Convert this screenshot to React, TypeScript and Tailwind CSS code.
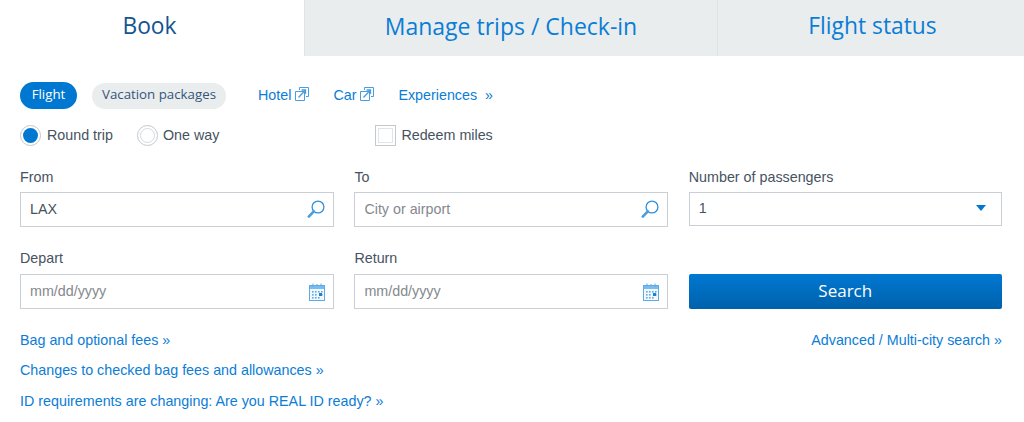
import React from 'react';

const linkCls = "text-[#0b7dd6] text-[14.3px] leading-[20px]";

function ExternalIcon() {
  return (
    <svg width="14" height="14" viewBox="0 0 14 14" fill="none" stroke="#4a9ee0" strokeWidth="1" className="ml-[4px] mb-[1px]">
      <path d="M4.5 3V.5h9v9H11" />
      <path d="M.5 4.5h9v9h-9z" />
      <path d="M3.5 10.5l7-7.5M6.5 3h4v4" strokeWidth="1.3" />
    </svg>
  );
}

function SearchIcon() {
  return (
    <svg width="18" height="19" viewBox="0 0 18 19" fill="none" className="shrink-0">
      <circle cx="11" cy="7" r="5.9" stroke="#2f8fdc" strokeWidth="1.3" />
      <path d="M6.8 11.4L1.8 16.6" stroke="#4a9ee0" strokeWidth="2.6" strokeLinecap="round" />
    </svg>
  );
}

function CalendarIcon() {
  const dots = [
    [4, 9], [7, 9], [10, 9], [13, 9],
    [4, 12], [7, 12], [13, 12],
    [4, 15], [7, 15], [10, 15],
  ];
  return (
    <svg width="16" height="18" viewBox="0 0 16 18" fill="none" className="shrink-0">
      <rect x="0.5" y="2.5" width="15" height="15" fill="#f1f8fd" stroke="#5fa9e4" />
      <rect x="1" y="3" width="14" height="3" fill="#7dbbea" />
      <path d="M4 .5v3M12 .5v3M8 1v1" stroke="#5fa9e4" />
      {dots.map(([x, y]) => (
        <rect key={`${x}-${y}`} x={x - 1} y={y - 1} width="1.6" height="1.6" fill="#5fa9e4" />
      ))}
      <rect x="10" y="10" width="3" height="3" fill="#1f7fcb" />
    </svg>
  );
}

function Field({ label, value, placeholder, icon, labelGap = 'mb-[5px]' }: { label: string; value?: string; placeholder?: string; icon: React.ReactNode; labelGap?: string }) {
  return (
    <div>
      <div className={`text-[14.3px] leading-[20px] text-[#46535f] ${labelGap}`}>{label}</div>
      <div className="h-[35px] border border-[#c9cfd4] bg-white pl-[9px] pr-[8px] flex items-center justify-between">
        <span className={`text-[14.3px] ${value ? 'text-[#46535f]' : 'text-[#85898d]'}`}>{value ?? placeholder}</span>
        {icon}
      </div>
    </div>
  );
}

export default function App() {
  return (
    <div className="w-[1024px] h-[422px] bg-white overflow-hidden font-['Liberation_Sans',Arial,sans-serif]">
      {/* Tabs */}
      <div className="flex h-[56px] font-['Open_Sans',sans-serif] text-[22.8px]">
        <div className="w-[304px] flex items-center justify-center text-[#14548f] pb-[4px] pr-[5px]">Book</div>
        <div className="w-[413px] bg-[#e9edee] border-l border-[#dfe4e6] flex items-center justify-center text-[23px] text-[#0b7dd6] pb-[4px]">Manage trips / Check-in</div>
        <div className="flex-1 bg-[#e9edee] border-l border-[#dfe4e6] flex items-center justify-center text-[#0b7dd6] pb-[4px] pl-[3px]">Flight status</div>
      </div>

      <div className="pl-[20px] pr-[22px]">
        {/* Product switch */}
        <div className="flex items-center mt-[26px] h-[27px]">
          <span className="h-[27px] w-[57px] pb-[1px] rounded-full bg-[#0078d2] text-white text-[13.3px] font-['Open_Sans',sans-serif] flex items-center justify-center">Flight</span>
          <span className="ml-[15px] h-[26px] w-[134px] pb-[1px] rounded-full bg-[#e9edee] text-[#36567a] text-[13.3px] font-['Open_Sans',sans-serif] flex items-center justify-center">Vacation packages</span>
          <span className={`ml-[32px] pb-[2px] flex items-center ${linkCls}`}>Hotel<ExternalIcon /></span>
          <span className={`ml-[24px] pb-[2px] flex items-center ${linkCls}`}>Car<ExternalIcon /></span>
          <span className={`ml-[24px] pb-[2px] ${linkCls}`}>Experiences&nbsp;&nbsp;»</span>
        </div>

        {/* Trip type */}
        <div className="flex items-center mt-[16px] h-[21px] text-[14.3px] text-[#46535f]">
          <span className="w-[21px] h-[21px] rounded-full border border-[#c3c9ce] flex items-center justify-center">
            <span className="w-[15px] h-[15px] rounded-full bg-[#0078d2]" />
          </span>
          <span className="ml-[6px]">Round trip</span>
          <span className="ml-[24px] w-[21px] h-[21px] rounded-full border border-[#c3c9ce] flex items-center justify-center">
            <span className="w-[15px] h-[15px] rounded-full border border-[#d5dade]" />
          </span>
          <span className="ml-[5px]">One way</span>
          <span className="ml-[156px] w-[21px] h-[21px] border border-[#c3c9ce] flex items-center justify-center">
            <span className="w-[15px] h-[15px] border border-[#e1e5e8]" />
          </span>
          <span className="ml-[5px]">Redeem miles</span>
        </div>

        {/* Form */}
        <div className="grid grid-cols-[314px_314px_313px] gap-x-[20.4px] gap-y-[21px] mt-[21px]">
          <Field label="From" value="LAX" icon={<SearchIcon />} />
          <Field label="To" placeholder="City or airport" icon={<SearchIcon />} />
          <div>
            <div className="text-[14.3px] leading-[20px] text-[#46535f] mb-[5px]">Number of passengers</div>
            <div className="h-[34px] border border-[#c9cfd4] bg-white pl-[9px] pr-[15px] flex items-center justify-between">
              <span className="text-[14.3px] text-[#46535f]">1</span>
              <span className="w-0 h-0 border-x-[5px] border-x-transparent border-t-[6px] border-t-[#0078d2] mb-[2px]" />
            </div>
          </div>
          <Field label="Depart" placeholder="mm/dd/yyyy" icon={<CalendarIcon />} labelGap="mb-[6px]" />
          <Field label="Return" placeholder="mm/dd/yyyy" icon={<CalendarIcon />} labelGap="mb-[6px]" />
          <div className="flex items-end">
            <button className="w-full h-[35px] pb-[2px] rounded-[2px] bg-gradient-to-b from-[#0078d2] to-[#0061ab] text-white text-[17px] font-['Open_Sans',sans-serif]">Search</button>
          </div>
        </div>

        {/* Links */}
        <div className="flex justify-between mt-[21px]">
          <span className={linkCls}>Bag and optional fees »</span>
          <span className={linkCls}>Advanced / Multi-city search »</span>
        </div>
        <div className={`mt-[10px] ${linkCls}`}>Changes to checked bag fees and allowances »</div>
        <div className={`mt-[11px] ${linkCls}`}>ID requirements are changing: Are you REAL ID ready? »</div>
      </div>
    </div>
  );
}
